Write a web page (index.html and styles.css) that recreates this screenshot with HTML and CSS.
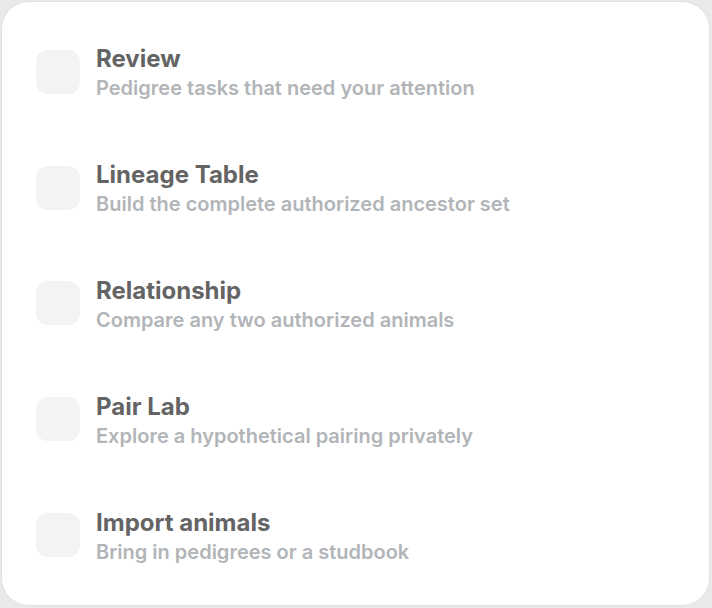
FILE: index.html
```html
<!DOCTYPE html>
<html lang="en">
<head>
<meta charset="utf-8">
<title>Pedigree tools</title>
<link rel="stylesheet" href="styles.css">
</head>
<body>
<div class="card">
  <div class="row">
    <div class="icon"></div>
    <div class="text">
      <div class="title">Review</div>
      <div class="sub">Pedigree tasks that need your attention</div>
    </div>
  </div>
  <div class="row">
    <div class="icon"></div>
    <div class="text">
      <div class="title">Lineage Table</div>
      <div class="sub">Build the complete authorized ancestor set</div>
    </div>
  </div>
  <div class="row">
    <div class="icon"></div>
    <div class="text">
      <div class="title">Relationship</div>
      <div class="sub">Compare any two authorized animals</div>
    </div>
  </div>
  <div class="row">
    <div class="icon"></div>
    <div class="text">
      <div class="title">Pair Lab</div>
      <div class="sub">Explore a hypothetical pairing privately</div>
    </div>
  </div>
  <div class="row">
    <div class="icon"></div>
    <div class="text">
      <div class="title">Import animals</div>
      <div class="sub">Bring in pedigrees or a studbook</div>
    </div>
  </div>
</div>
</body>
</html>
```
FILE: styles.css
```css
html, body {
  margin: 0;
  padding: 0;
}
body {
  background: #e8eaea;
  width: 712px;
  height: 608px;
  padding: 1px 2px 0 1px;
  box-sizing: border-box;
  font-family: Inter, "Noto Sans", sans-serif;
}
.card {
  box-sizing: border-box;
  height: 605px;
  background: #ffffff;
  border: 1px solid #dfe2e2;
  border-radius: 28px;
  padding: 12px 34px;
  display: flex;
  flex-direction: column;
}
.row {
  height: 116px;
  display: flex;
  align-items: center;
  gap: 16px;
}
.icon {
  width: 44px;
  height: 44px;
  border-radius: 12px;
  background: #f2f3f5;
  flex: none;
}
.text {
  display: flex;
  flex-direction: column;
  padding-top: 5px;
}
.title {
  font-size: 24px;
  line-height: 28px;
  font-weight: 700;
  color: #646464;
}
.sub {
  font-size: 20px;
  line-height: 30px;
  font-weight: 600;
  color: #b2b5b8;
}
```
